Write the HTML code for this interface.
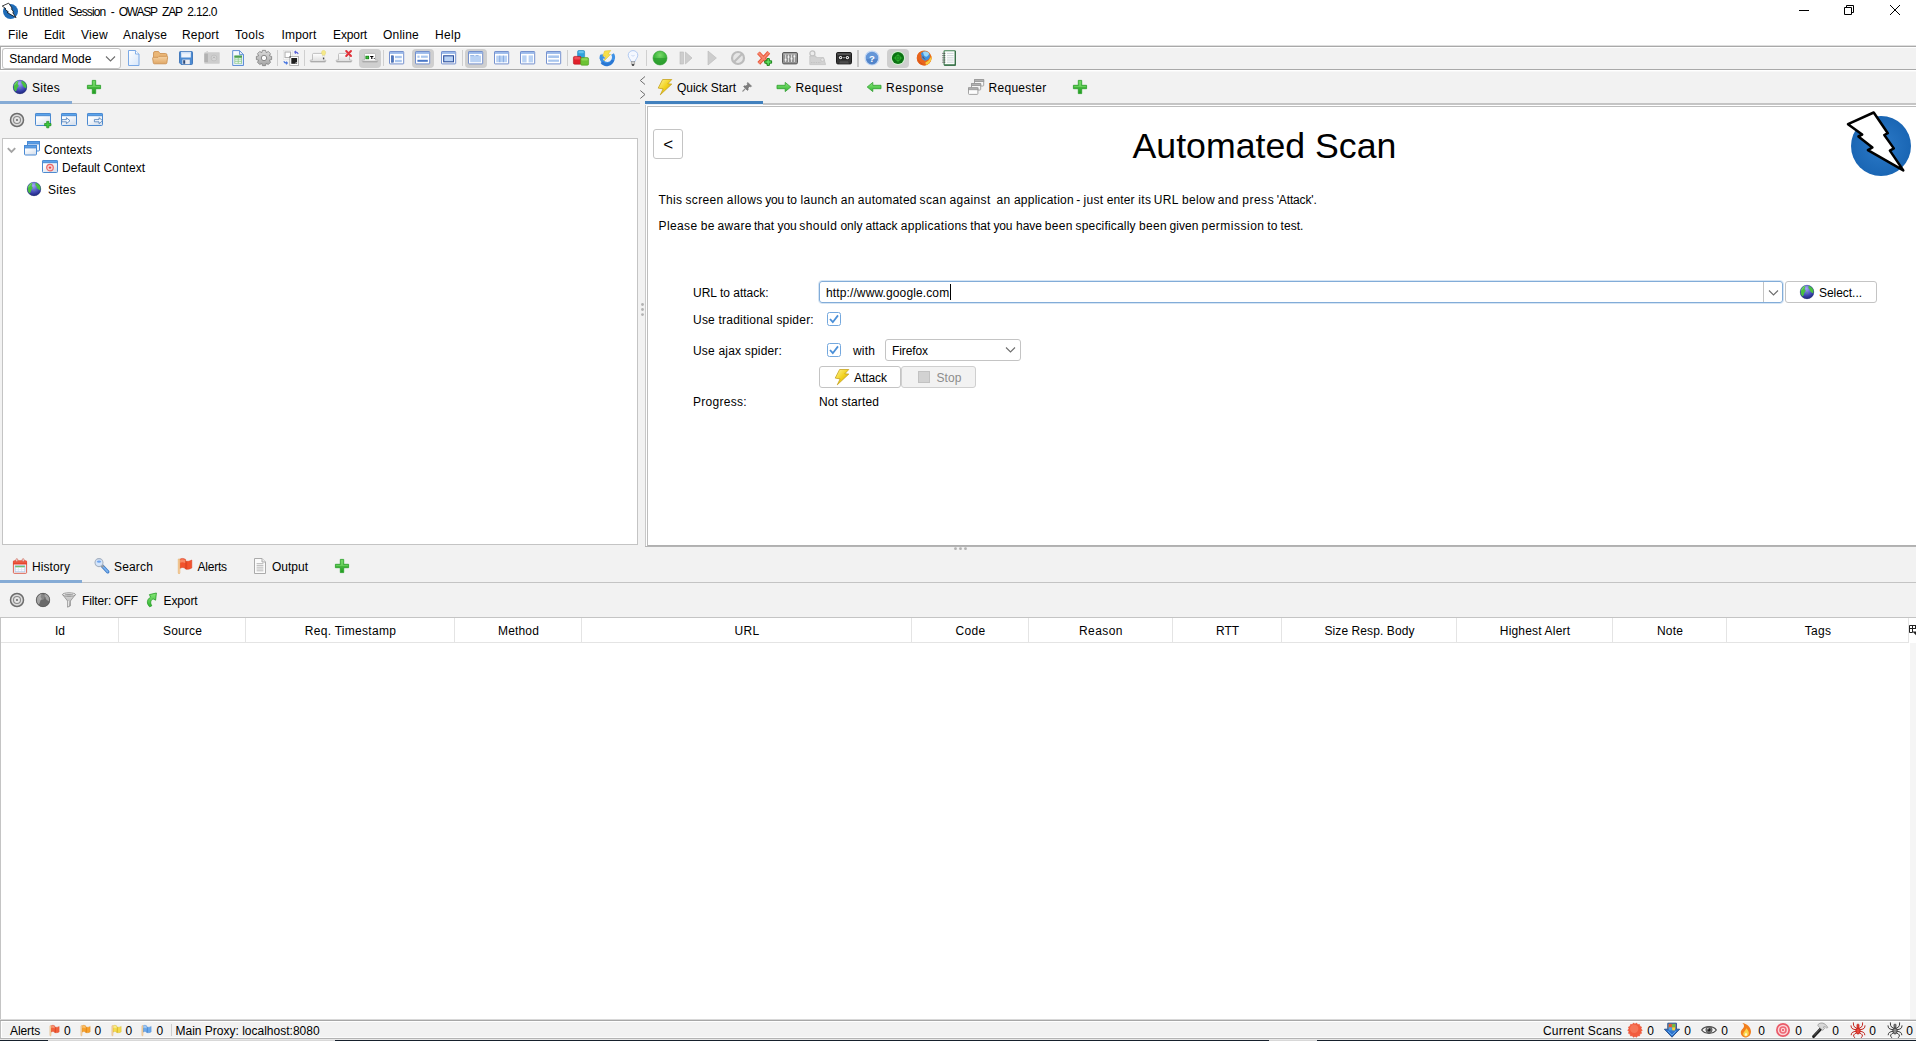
<!DOCTYPE html>
<html><head><meta charset="utf-8"><title>Untitled Session - OWASP ZAP 2.12.0</title>
<style>
html,body{margin:0;padding:0;}
body{width:1916px;height:1041px;overflow:hidden;background:#f2f2f2;position:relative;font-family:"Liberation Sans",sans-serif;font-size:12px;color:#000;}
.a{position:absolute;box-sizing:border-box;}
.t{position:absolute;white-space:nowrap;line-height:14px;font-size:12px;}
svg{position:absolute;overflow:visible;}
.tb{position:absolute;box-sizing:border-box;background:#cfcfcf;border-radius:4px;}
.btn{position:absolute;box-sizing:border-box;background:#fff;border:1px solid #c4c4c4;border-radius:3px;}
</style></head><body>


<svg width="0" height="0" style="left:0;top:0"><defs>
<linearGradient id="gBlueV" x1="0" y1="0" x2="0" y2="1"><stop offset="0" stop-color="#7fb4ea"/><stop offset="1" stop-color="#3f7fc8"/></linearGradient>
<linearGradient id="gDoc" x1="0" y1="0" x2="1" y2="1"><stop offset="0" stop-color="#ffffff"/><stop offset="1" stop-color="#d6e6fa"/></linearGradient>
<linearGradient id="gFolder" x1="0" y1="0" x2="0" y2="1"><stop offset="0" stop-color="#f6d3a4"/><stop offset="1" stop-color="#e0a766"/></linearGradient>
<linearGradient id="gGreen" x1="0" y1="0" x2="0" y2="1"><stop offset="0" stop-color="#6fd45f"/><stop offset="1" stop-color="#1f9a1f"/></linearGradient>
<linearGradient id="gGreenL" x1="0" y1="0" x2="0" y2="1"><stop offset="0" stop-color="#86e878"/><stop offset="1" stop-color="#32b432"/></linearGradient>
<linearGradient id="gWin" x1="0" y1="0" x2="0.6" y2="1"><stop offset="0" stop-color="#ffffff"/><stop offset="0.4" stop-color="#fbfcfe"/><stop offset="1" stop-color="#d9e2ee"/></linearGradient>
<radialGradient id="gGlobe" cx="0.45" cy="0.25" r="0.75"><stop offset="0" stop-color="#a8a8f6"/><stop offset="0.45" stop-color="#5c62d0"/><stop offset="0.8" stop-color="#2f389c"/><stop offset="1" stop-color="#1f2778"/></radialGradient>
<radialGradient id="gGreenBall" cx="0.5" cy="0.3" r="0.8"><stop offset="0" stop-color="#7ad86a"/><stop offset="0.55" stop-color="#39b53a"/><stop offset="1" stop-color="#1f8f24"/></radialGradient>
<radialGradient id="gZap" cx="0.5" cy="0.5" r="0.5"><stop offset="0" stop-color="#2c7ac8"/><stop offset="1" stop-color="#1a66b4"/></radialGradient>
<linearGradient id="gBolt" x1="0" y1="0" x2="1" y2="1"><stop offset="0" stop-color="#fdf59a"/><stop offset="0.5" stop-color="#f2d21e"/><stop offset="1" stop-color="#c49a0c"/></linearGradient>
<linearGradient id="gGrey" x1="0" y1="0" x2="0" y2="1"><stop offset="0" stop-color="#dcdcdc"/><stop offset="1" stop-color="#a4a4a4"/></linearGradient>
<linearGradient id="gTab" x1="0" y1="0" x2="0" y2="1"><stop offset="0" stop-color="#ffffff"/><stop offset="1" stop-color="#dddddd"/></linearGradient>
</defs></svg>

<div class="a" style="left:0px;top:0px;width:1916px;height:46px;background:#fff;"></div>
<svg style="left:1px;top:1.8px" width="17" height="17" viewBox="1843 108 68 68"><circle cx="1881" cy="146" r="30" fill="#1f6cb8"/><path d="M1873.7 112.5 L1848 124.2 L1862.2 134.6 L1858.4 136.4 L1872.4 147.5 L1867.9 150.1 L1903.3 170.4 L1889.9 150.6 L1893.8 148.4 L1884.3 135 L1887.8 133.2 Z" fill="#fff" stroke="#000" stroke-width="3" stroke-linejoin="round"/></svg>
<div class="t" style="left:23.6px;top:5px;letter-spacing:-0.10px;">Untitled</div>
<div class="t" style="left:68.7px;top:5px;letter-spacing:-0.87px;">Session</div>
<div class="t" style="left:110.7px;top:5px;">-</div>
<div class="t" style="left:118.8px;top:5px;letter-spacing:-1.28px;">OWASP</div>
<div class="t" style="left:162.0px;top:5px;letter-spacing:-1.17px;">ZAP</div>
<div class="t" style="left:187.3px;top:5px;letter-spacing:-0.67px;">2.12.0</div>
<svg style="left:1790px;top:0" width="126" height="24" viewBox="1790 0 126 24"><path d="M1799 10.5 h10" stroke="#000" stroke-width="1"/><path d="M1844.5 7.5 h7 v7 h-7z M1846.5 7.5 v-2 h7 v7 h-2" fill="none" stroke="#000" stroke-width="1"/><path d="M1890 5 l10 10 M1900 5 l-10 10" stroke="#000" stroke-width="1"/></svg>
<div class="t" style="left:8px;top:28px;letter-spacing:0.17px;">File</div>
<div class="t" style="left:44px;top:28px;letter-spacing:0.08px;">Edit</div>
<div class="t" style="left:81px;top:28px;letter-spacing:0.25px;">View</div>
<div class="t" style="left:123px;top:28px;letter-spacing:0.19px;">Analyse</div>
<div class="t" style="left:182px;top:28px;letter-spacing:0.16px;">Report</div>
<div class="t" style="left:235px;top:28px;letter-spacing:0.33px;">Tools</div>
<div class="t" style="left:281.5px;top:28px;letter-spacing:0.17px;">Import</div>
<div class="t" style="left:333px;top:28px;letter-spacing:-0.11px;">Export</div>
<div class="t" style="left:383px;top:28px;letter-spacing:0.22px;">Online</div>
<div class="t" style="left:435px;top:28px;letter-spacing:0.33px;">Help</div>
<div class="a" style="left:0px;top:45px;width:1916px;height:1px;background:#dedede;"></div>
<div class="a" style="left:0px;top:46px;width:1916px;height:1px;background:#a9a9a9;"></div>
<div class="a" style="left:0px;top:47px;width:1916px;height:1px;background:#fff;"></div>
<div class="a" style="left:0px;top:69px;width:1916px;height:1px;background:#a9a9a9;"></div>
<div class="a" style="left:0px;top:70px;width:1916px;height:1px;background:#fff;"></div>
<div class="a" style="left:0px;top:71px;width:1916px;height:1px;background:#f8f8f8;"></div>
<div class="a" style="left:0px;top:47px;width:1px;height:22px;background:#a9a9a9;"></div>
<div class="a" style="left:1px;top:47px;width:1px;height:22px;background:#fff;"></div>
<div class="a" style="left:2px;top:48px;width:119px;height:21px;background:#fff;border:1px solid #c4c4c4;border-radius:3px"></div>
<div class="t" style="left:9.2px;top:52px;letter-spacing:0.02px;">Standard Mode</div>
<svg style="left:105px;top:54.5px" width="11" height="8" viewBox="0 0 11 8"><path d="M1 1.5 L5.5 6 L10 1.5" fill="none" stroke="#6e6e6e" stroke-width="1.1"/></svg>
<div class="tb" style="left:359px;top:49px;width:22px;height:19px"></div>
<div class="tb" style="left:412px;top:49px;width:22px;height:19px"></div>
<div class="tb" style="left:465px;top:49px;width:22px;height:19px"></div>
<div class="tb" style="left:887px;top:49px;width:22px;height:19px"></div>
<div class="a" style="left:277px;top:50px;width:1px;height:16px;background:#cfcfcf;"></div>
<div class="a" style="left:304px;top:50px;width:1px;height:16px;background:#cfcfcf;"></div>
<div class="a" style="left:383px;top:50px;width:1px;height:16px;background:#cfcfcf;"></div>
<div class="a" style="left:462px;top:50px;width:1px;height:16px;background:#cfcfcf;"></div>
<div class="a" style="left:567px;top:50px;width:1px;height:16px;background:#cfcfcf;"></div>
<div class="a" style="left:646px;top:50px;width:1px;height:16px;background:#cfcfcf;"></div>
<div class="a" style="left:857px;top:50px;width:2px;height:17px;background:#c8c8c8;"></div>
<svg style="left:126px;top:50px" width="16" height="16" viewBox="0 0 16 16"><path d="M2.5 0.5 h7 l3.5 3.5 v11.5 h-10.5z" fill="url(#gDoc)" stroke="#7aa9e6" stroke-width="1"/><path d="M9.5 0.5 v3.5 h3.5" fill="#fff" stroke="#7aa9e6" stroke-width="0.9"/></svg>
<svg style="left:152px;top:49.5px" width="16" height="16" viewBox="0 0 16 16"><path d="M1.5 3 q0-1.5 1.5-1.5 h3.5 l1.5 2 h5.5 q1.5 0 1.5 1.5 v4 h-13.5z" fill="#eab676" stroke="#c98d4c" stroke-width="0.8"/><path d="M0.6 8.2 q0-0.9 1-0.9 h4.5 l1-1 h7.6 q1 0 0.9 0.9 l-0.7 5.6 q-0.1 1-1.1 1 h-11.4 q-1 0-1.1-1z" fill="url(#gFolder)" stroke="#c98d4c" stroke-width="0.8"/></svg>
<svg style="left:178px;top:50px" width="16" height="16" viewBox="0 0 16 16"><path d="M1.5 2.4 q0-0.9 0.9-0.9 h11.2 q0.9 0 0.9 0.9 v11.2 q0 0.9-0.9 0.9 h-10.4 l-1.7-1.7z" fill="#4d8bd2" stroke="#3a72b8" stroke-width="0.9"/><rect x="3.2" y="1.9" width="9.6" height="5.6" fill="#eef4fc"/><rect x="3.2" y="1.9" width="9.6" height="1.6" fill="#cfe0f6"/><rect x="4.4" y="9.6" width="7.4" height="4.6" fill="#ececf0"/><rect x="5.2" y="10.2" width="2" height="3.6" fill="#2c4a7c"/></svg>
<svg style="left:204px;top:50px" width="16" height="16" viewBox="0 0 16 16"><rect x="0.3" y="2.3" width="15.4" height="11.4" rx="0.6" fill="#cdcdcd"/><rect x="0.3" y="3.6" width="3.6" height="8.6" fill="#b2b2b2"/><rect x="2.4" y="1" width="1.6" height="1.6" fill="#d4d4d4"/><circle cx="10" cy="8" r="2.9" fill="#d6d6d6" stroke="#bcbcbc" stroke-width="0.8"/><path d="M8.8 8.4 l1.2 -1.6 l1.2 1.6" fill="none" stroke="#b0b0b0" stroke-width="0.8"/></svg>
<svg style="left:230px;top:50px" width="16" height="16" viewBox="0 0 16 16"><path d="M2.7 0.6 h6.8 l4 4 v10.9 h-10.8z" fill="url(#gDoc)" stroke="#5f8fd6" stroke-width="1"/><path d="M9.5 0.6 v4 h4z" fill="#e8effa" stroke="#5f8fd6" stroke-width="0.9"/><rect x="4.4" y="5.6" width="7.6" height="8.2" fill="#8fca8f"/><rect x="4.4" y="5.6" width="7.6" height="1.9" fill="#4f9f4f"/><path d="M5.2 8.9 h2.6 M8.6 8.9 h2.6 M5.2 10.8 h2.6 M8.6 10.8 h2.6 M5.2 12.7 h2.6 M8.6 12.7 h2.6" stroke="#fff" stroke-width="1"/></svg>
<svg style="left:256px;top:50px" width="16" height="16" viewBox="0 0 16 16"><path d="M5.79 2.64 L6.45 0.36 L9.55 0.36 L10.21 2.64 L10.23 2.65 L12.31 1.50 L14.50 3.69 L13.35 5.77 L13.36 5.79 L15.64 6.45 L15.64 9.55 L13.36 10.21 L13.35 10.23 L14.50 12.31 L12.31 14.50 L10.23 13.35 L10.21 13.36 L9.55 15.64 L6.45 15.64 L5.79 13.36 L5.77 13.35 L3.69 14.50 L1.50 12.31 L2.65 10.23 L2.64 10.21 L0.36 9.55 L0.36 6.45 L2.64 5.79 L2.65 5.77 L1.50 3.69 L3.69 1.50 L5.77 2.65 Z" fill="url(#gGrey)" stroke="#7d7d7d" stroke-width="0.8" stroke-linejoin="round"/><circle cx="8" cy="8" r="2.7" fill="#fbfbfb" stroke="#7d7d7d" stroke-width="0.9"/></svg>
<svg style="left:283px;top:50px" width="16" height="16" viewBox="0 0 16 16"><rect x="0.4" y="0.4" width="9" height="9" fill="#fff" stroke="#dcdcdc" stroke-width="0.6"/><rect x="2" y="2" width="5.6" height="5.6" fill="#fff" stroke="#b0b0b0" stroke-width="1.1"/><rect x="6.8" y="6.6" width="8.8" height="8.8" fill="#fff" stroke="#a4a4a4" stroke-width="0.8"/><rect x="8.3" y="8" width="5.8" height="5.8" fill="#1e1e1e"/><rect x="12.6" y="12.4" width="1.5" height="1.4" fill="#fff"/><rect x="13.1" y="12.9" width="0.8" height="0.8" fill="#222"/><rect x="6.6" y="6.4" width="1.2" height="1.2" fill="#333"/><path d="M15.2 4 q-0.8-2.2-3.4-1.8 M11.4 2.2 l1.7-1.3 M11.4 2.2 l1.7 1.3" stroke="#5a62d8" stroke-width="1.1" fill="none"/><path d="M0.8 11.2 q0.8 2.2 3.4 1.8 M4.6 13 l-1.7 1.3 M4.6 13 l-1.7-1.3" stroke="#4a78e0" stroke-width="1.1" fill="none"/></svg>
<svg style="left:310px;top:50px" width="16" height="16" viewBox="0 0 16 16"><path d="M2.5 10 V4.6 q0-1.2 1.2-1.2 h8.6 q1.2 0 1.2 1.2 V10 h1.6 q0.8 0 0.8 0.8 q0 0.8-0.8 0.8 h-14.2 q-0.8 0-0.8-0.8 q0-0.8 0.8-0.8z" fill="url(#gTab)" stroke="#b4b4b4" stroke-width="0.8"/><path d="M0.6 11.8 h14.8" stroke="#9a9a9a" stroke-width="0.8"/><path d="M13.6 0.4 c1.6 0 2.2 1.4 2 2.6 c-0.2 1-0.8 1.6-0.9 2.6 h-2.2 c-0.1-1-0.7-1.6-0.9-2.6 c-0.2-1.2 0.4-2.6 2-2.6z" fill="#f5e98a" stroke="#e3d46a" stroke-width="0.5"/><rect x="12.7" y="5.6" width="1.8" height="2" fill="#f4f4f4" stroke="#cfcfcf" stroke-width="0.3"/><rect x="12.9" y="7.6" width="1.4" height="1.5" fill="#4a4a4a"/></svg>
<svg style="left:336px;top:50px" width="16" height="16" viewBox="0 0 16 16"><path d="M2.5 10 V4.6 q0-1.2 1.2-1.2 h8.6 q1.2 0 1.2 1.2 V10 h1.6 q0.8 0 0.8 0.8 q0 0.8-0.8 0.8 h-14.2 q-0.8 0-0.8-0.8 q0-0.8 0.8-0.8z" fill="url(#gTab)" stroke="#b4b4b4" stroke-width="0.8"/><path d="M0.6 11.8 h14.8" stroke="#9a9a9a" stroke-width="0.8"/><path d="M10.2 1 L15 6 M15 1 L10.2 6" stroke="#e0323a" stroke-width="2" stroke-linecap="round"/></svg>
<svg style="left:362px;top:50px" width="16" height="16" viewBox="0 0 16 16"><path d="M2.5 10 V4.6 q0-1.2 1.2-1.2 h8.6 q1.2 0 1.2 1.2 V10 h1.6 q0.8 0 0.8 0.8 q0 0.8-0.8 0.8 h-14.2 q-0.8 0-0.8-0.8 q0-0.8 0.8-0.8z" fill="url(#gTab)" stroke="#b4b4b4" stroke-width="0.8"/><path d="M0.6 11.8 h14.8" stroke="#9a9a9a" stroke-width="0.8"/><rect x="3.2" y="4" width="9.6" height="6" fill="#fff"/><rect x="3.9" y="6.2" width="2.8" height="2.6" fill="#3cc43c" stroke="#0a7a0a" stroke-width="0.8"/><path d="M8.2 6.5 h3.2 M9.8 6.5 v2.5" stroke="#000" stroke-width="1.2"/><rect x="11.8" y="8" width="0.9" height="0.9" fill="#000"/></svg>
<svg style="left:388.5px;top:51px" width="16" height="16" viewBox="0 0 16 16"><rect x="0.5" y="0.5" width="14.2" height="12.4" rx="0.6" fill="#fff" stroke="#6585c8" stroke-width="0.9"/><rect x="1" y="1" width="13.2" height="1.9" fill="#9bbaea"/><rect x="2.4" y="4.8" width="2" height="6.4" fill="#4a78c8" stroke="#35589c" stroke-width="0.6"/><rect x="6" y="4.8" width="6.8" height="2.4" fill="#a9c6ee"/><rect x="6" y="8.8" width="6.8" height="2.4" fill="#a9c6ee"/></svg>
<svg style="left:415px;top:51px" width="16" height="16" viewBox="0 0 16 16"><rect x="0.5" y="0.5" width="14.2" height="12.4" rx="0.6" fill="#fff" stroke="#6585c8" stroke-width="0.9"/><rect x="1" y="1" width="13.2" height="1.9" fill="#9bbaea"/><rect x="2.4" y="4.6" width="2.2" height="2.2" fill="#a9c6ee"/><rect x="6" y="4.6" width="6.8" height="2.2" fill="#a9c6ee"/><rect x="2.4" y="8.8" width="10.4" height="2" fill="#4a78c8"/></svg>
<svg style="left:441px;top:51px" width="16" height="16" viewBox="0 0 16 16"><rect x="0.5" y="0.5" width="14.2" height="12.4" rx="0.6" fill="#fff" stroke="#6585c8" stroke-width="0.9"/><rect x="1" y="1" width="13.2" height="1.9" fill="#9bbaea"/><rect x="2.7" y="4.8" width="9.8" height="6" fill="#b9d2f4" stroke="#2c4f9c" stroke-width="1.1"/></svg>
<svg style="left:468px;top:51px" width="16" height="16" viewBox="0 0 16 16"><rect x="0.5" y="0.5" width="14.2" height="12.4" rx="0.6" fill="#fff" stroke="#6585c8" stroke-width="0.9"/><rect x="1" y="1" width="13.2" height="1.9" fill="#9bbaea"/><rect x="2.2" y="4.6" width="10.8" height="6.6" fill="#b9d2f4"/><path d="M2.2 4.6 h4 M7.6 4.6 h3" stroke="#7fa4dc" stroke-width="0.8"/></svg>
<svg style="left:494px;top:51px" width="16" height="16" viewBox="0 0 16 16"><rect x="0.5" y="0.5" width="14.2" height="12.4" rx="0.6" fill="#fff" stroke="#6585c8" stroke-width="0.9"/><rect x="1" y="1" width="13.2" height="1.9" fill="#9bbaea"/><rect x="2.2" y="4.6" width="10.8" height="6.6" fill="#b9d2f4"/><path d="M5.8 4.6 v6.6 M9.4 4.6 v6.6" stroke="#7fa4dc" stroke-width="0.9"/></svg>
<svg style="left:520px;top:51px" width="16" height="16" viewBox="0 0 16 16"><rect x="0.5" y="0.5" width="14.2" height="12.4" rx="0.6" fill="#fff" stroke="#6585c8" stroke-width="0.9"/><rect x="1" y="1" width="13.2" height="1.9" fill="#9bbaea"/><rect x="2.2" y="4.4" width="4.4" height="7" fill="#b9d2f4"/><rect x="8.6" y="4.4" width="4.4" height="7" fill="#b9d2f4"/></svg>
<svg style="left:546px;top:51px" width="16" height="16" viewBox="0 0 16 16"><rect x="0.5" y="0.5" width="14.2" height="12.4" rx="0.6" fill="#fff" stroke="#6585c8" stroke-width="0.9"/><rect x="1" y="1" width="13.2" height="1.9" fill="#9bbaea"/><rect x="2.2" y="4.4" width="10.8" height="2.6" fill="#a9c6ee"/><rect x="2.2" y="8.6" width="10.8" height="2.2" fill="#a9c6ee"/></svg>
<svg style="left:572.5px;top:49.5px" width="16" height="16" viewBox="0 0 16 16"><rect x="4.6" y="0.5" width="7" height="7.4" rx="1.3" fill="#2ea2dc" stroke="#1c86bc" stroke-width="0.6"/><rect x="0.4" y="6.4" width="7.8" height="7.8" rx="1.3" fill="#e0202a" stroke="#b8141c" stroke-width="0.6"/><rect x="7.6" y="7.6" width="8" height="7.6" rx="1.3" fill="#6cc234" stroke="#4a9a1c" stroke-width="0.6"/><rect x="8.4" y="8.2" width="6.4" height="2.4" rx="1" fill="#9be060" opacity="0.7"/><rect x="1.2" y="7" width="6.2" height="2.4" rx="1" fill="#f4606a" opacity="0.7"/><rect x="5.4" y="1.1" width="5.4" height="2.2" rx="1" fill="#7cd0f4" opacity="0.7"/></svg>
<svg style="left:599px;top:50px" width="16" height="16" viewBox="0 0 16 16"><path d="M13.6 4 A6.2 6.2 0 1 1 2.6 5" fill="none" stroke="#3f92e6" stroke-width="3"/><path d="M0.4 8.6 L6.6 8.8 L3 3.4Z" fill="#3f92e6"/><path d="M2.8 12.2 A6.2 6.2 0 0 0 13.8 10" fill="none" stroke="#2a78d4" stroke-width="3"/><path d="M5.6 1 L11.8 0.4 L9 4.2 L11.6 4.4 L5.2 10.8 L6.8 6.2 L3.8 6.2Z" fill="#f7e04a" stroke="#dcbc24" stroke-width="0.5"/></svg>
<svg style="left:625px;top:50px" width="16" height="16" viewBox="0 0 16 16"><path d="M8 0.6 C5 0.6 3.2 2.8 3.2 5.2 C3.2 7.8 5.6 9.2 6 11.6 h4 C10.4 9.2 12.8 7.8 12.8 5.2 C12.8 2.8 11 0.6 8 0.6Z" fill="#f4f8ff" stroke="#a9c4ee" stroke-width="0.9"/><path d="M6.4 5.4 q1.6 1.4 3.2 0" fill="none" stroke="#b9cdee" stroke-width="0.7"/><rect x="6.2" y="11.6" width="3.6" height="2.6" fill="#cfcfcf" stroke="#8a8a8a" stroke-width="0.5"/><rect x="6.8" y="14.2" width="2.4" height="1.5" rx="0.6" fill="#222"/></svg>
<svg style="left:652px;top:50px" width="16" height="16" viewBox="0 0 16 16"><circle cx="8" cy="8" r="7" fill="url(#gGreenBall)" stroke="#2a9a2c" stroke-width="0.6"/><path d="M1.6 8 h12.8 a6.4 6.4 0 0 1 -12.8 0z" fill="#2e9e30" opacity="0.75"/></svg>
<svg style="left:678px;top:50px" width="16" height="16" viewBox="0 0 16 16"><rect x="2" y="2" width="3.4" height="12" fill="#cdcdcd" stroke="#b8b8b8" stroke-width="0.6"/><path d="M7.4 2 L14 8 L7.4 14Z" fill="#cdcdcd" stroke="#b8b8b8" stroke-width="0.6"/></svg>
<svg style="left:704px;top:50px" width="16" height="16" viewBox="0 0 16 16"><path d="M4 1 L12.4 8 L4 15Z" fill="#cdcdcd" stroke="#b8b8b8" stroke-width="0.6"/></svg>
<svg style="left:730px;top:50px" width="16" height="16" viewBox="0 0 16 16"><circle cx="8" cy="8" r="6" fill="#e6e6e6" stroke="#bcbcbc" stroke-width="2.2"/><path d="M4 12 L12 4" stroke="#bcbcbc" stroke-width="2.2"/></svg>
<svg style="left:756px;top:50px" width="16" height="16" viewBox="0 0 16 16"><path d="M2.4 2.8 L12 13 M12.8 2.4 L2.8 13.4" stroke="#e8553a" stroke-width="3.8" stroke-linecap="butt"/><path d="M2.4 2.8 L12 13 M12.8 2.4 L2.8 13.4" stroke="#f6866c" stroke-width="2" stroke-linecap="butt"/><path d="M11 8.6 h2.4 v2.2 h2.2 v2.4 h-2.2 v2.2 h-2.4 v-2.2 h-2.2 v-2.4 h2.2z" fill="#5fdc5f" stroke="#0f7a0f" stroke-width="0.9"/></svg>
<svg style="left:782px;top:50px" width="16" height="16" viewBox="0 0 16 16"><rect x="0.5" y="2.5" width="15" height="11.4" rx="1.4" fill="#929292" stroke="#5a5a5a"/><rect x="1.4" y="3.4" width="13.2" height="1.6" rx="0.8" fill="#a8a8a8"/><path d="M3.6 4.6 v7.4 M6.5 4.6 v7.4 M9.5 4.6 v7.4 M12.4 4.6 v7.4" stroke="#e4e4e4" stroke-width="0.9"/><path d="M2.7 9.6 h1.8 M5.6 7 h1.8 M8.6 8.6 h1.8 M11.5 6.4 h1.8" stroke="#f6f6f6" stroke-width="1.7"/></svg>
<svg style="left:809px;top:50px" width="16" height="16" viewBox="0 0 16 16"><circle cx="3.4" cy="3.4" r="2.5" fill="#ececec" stroke="#c2c2c2" stroke-width="1.3"/><path d="M0.8 6 h6.2 v1.6 h7.6 l2 7 h-15.8z" fill="#d2d2d2" stroke="#c0c0c0" stroke-width="0.7"/><circle cx="13.4" cy="9.8" r="1.7" fill="#e4e4e4" stroke="#bcbcbc" stroke-width="0.6"/><path d="M2 12.6 h10" stroke="#bdbdbd" stroke-width="0.8" stroke-dasharray="1.4 1"/></svg>
<svg style="left:836px;top:50px" width="16" height="16" viewBox="0 0 16 16"><rect x="0.5" y="2.5" width="15" height="11.4" rx="1.3" fill="#363636" stroke="#1c1c1c"/><rect x="1.4" y="3.3" width="13.2" height="1.6" fill="#585858"/><rect x="2.4" y="5.6" width="11.2" height="4" rx="1" fill="#1a1a1a"/><circle cx="4.6" cy="7.6" r="1.7" fill="#f2f2f2"/><circle cx="4.6" cy="7.6" r="0.7" fill="#222"/><circle cx="11.4" cy="7.6" r="1.7" fill="#f2f2f2"/><circle cx="11.4" cy="7.6" r="0.7" fill="#222"/><rect x="6.8" y="6.9" width="2.4" height="1.4" fill="#8a8a8a"/><path d="M3 13.4 l1-2.2 h8 l1 2.2" fill="#4e4e4e"/></svg>
<svg style="left:864px;top:50px" width="16" height="16" viewBox="0 0 16 16"><circle cx="8" cy="8" r="6.9" fill="#6496d8" stroke="#c4d8f4" stroke-width="1.3"/><path d="M2.4 9 a5.6 5.6 0 0 0 11.2 0z" fill="#4a7ec4" opacity="0.7"/><text x="8" y="11.6" font-family="Liberation Sans, sans-serif" font-weight="bold" font-size="9.5" fill="#fff" text-anchor="middle">?</text></svg>
<svg style="left:890px;top:49.5px" width="16" height="16" viewBox="0 0 16 16"><circle cx="8" cy="8" r="7" fill="#d2f4d2"/><circle cx="8" cy="8" r="6.1" fill="#0b7213"/><circle cx="8" cy="8" r="2.6" fill="none" stroke="#30b830" stroke-width="0.8"/><path d="M8 3.6 v8.8 M3.6 8 h8.8" stroke="#30b830" stroke-width="0.8"/></svg>
<svg style="left:916px;top:50px" width="16" height="16" viewBox="0 0 16 16"><circle cx="8.2" cy="8" r="7.4" fill="#e8701e"/><circle cx="9" cy="6.2" r="4.8" fill="#3f92e0"/><path d="M7 2 C9 0.8 12 1.4 13.2 3.6 C12.6 6 10.8 7 9.4 6.6 C8 6 7.6 4.6 7 2Z" fill="#9ad8f8"/><path d="M0.8 8 C0.8 5 2.4 2.6 4.8 1.6 C4.2 3.4 4.6 4.6 5.8 5.2 C5 6.6 5.4 8.6 7 9.8 C8.6 11 10.6 10.8 12 9.8 C13.4 9 14.4 7.6 15.4 6 C16 10.2 13.4 14.8 9 15.4 C4.4 15.8 0.8 12.4 0.8 8Z" fill="#e8641c"/><path d="M2 9 C2.4 12 5 14.6 8.4 14.8 C5.6 13.8 3.4 11.8 2 9Z" fill="#c8401c" opacity="0.7"/><path d="M15.4 6 C16 9.6 14.2 13.4 10.8 14.8 C9.6 14.4 9.2 13.4 9.6 12.2 C11.2 11.8 13 10.4 13.6 8.8 C14.4 8 15 7 15.4 6Z" fill="#f8cc3c"/><path d="M6 6.6 C6.6 8.2 8 9.6 9.8 9.6 L8.4 8.2 L7.6 6.4Z" fill="#7c2c10" opacity="0.6"/></svg>
<svg style="left:941px;top:50px" width="16" height="16" viewBox="0 0 16 16"><rect x="3.1" y="0.7" width="11.2" height="14.4" rx="0.6" fill="#fbfdfb" stroke="#3f8050" stroke-width="1.1"/><path d="M14.3 1 v14.1 h-11" fill="none" stroke="#356c44" stroke-width="1.1"/><path d="M6 3.4 h6.6 M6 5.6 h6.6 M6 7.8 h6.6 M6 10 h6.6 M6 12.2 h6.6" stroke="#c4ccd0" stroke-width="0.8"/><path d="M1.4 3.4 h3.4 M1.4 5.6 h3.4 M1.4 7.8 h3.4 M1.4 10 h3.4 M1.4 12.2 h3.4" stroke="#4a4a4a" stroke-width="1" stroke-dasharray="1.2 0.5"/></svg>
<div class="a" style="left:0px;top:103px;width:640px;height:1px;background:#c4c4c4;"></div>
<div class="a" style="left:0px;top:101px;width:72px;height:3px;background:#85abd5;"></div>
<svg style="left:12px;top:79px" width="16" height="16" viewBox="0 0 16 16"><circle cx="8" cy="8" r="7" fill="url(#gGlobe)"/><path d="M3.4 3.4 C4.4 2.2 5.6 1.8 6.4 2.2 C6.4 3.4 5.4 4 5.6 5.2 C6.4 5.8 7 6.6 6.4 7.6 C5.6 8 5.4 9 5 10 C4.6 11 4.4 12 3.6 12.6 C1.4 10.4 1 6.2 3.4 3.4Z" fill="#48c040"/><path d="M9.6 1.8 C11.2 2 12.8 3 13.8 4.6 C14.6 6 14.8 7.6 14.4 9 C13.6 9.4 12.8 8.8 12 8 C11 7.6 10.4 6.8 10.8 5.8 C10.2 5 9.2 4.4 9.4 3.2Z" fill="#48c040"/><path d="M7.4 8.6 C8.2 8.2 8.8 8.8 8.6 9.6 C8.2 10 7.6 9.6 7.4 8.6Z" fill="#48c040"/><path d="M3.4 3.4 C4.4 2.2 5.6 1.8 6.4 2.2 C6 3 5 3.4 4.6 4.4 C4 5.4 3 6.2 2 6.4 C2.2 5.2 2.6 4.2 3.4 3.4Z" fill="#7ee070" opacity="0.7"/><circle cx="8" cy="8" r="6.8" fill="none" stroke="#27357a" stroke-width="0.6" opacity="0.55"/></svg>
<div class="t" style="left:32px;top:81px;letter-spacing:0.26px;">Sites</div>
<svg style="left:86px;top:79px" width="16" height="16" viewBox="0 0 16 16"><path d="M6.3 1.4 h3.4 v4.9 h4.9 v3.4 h-4.9 v4.9 h-3.4 v-4.9 h-4.9 v-3.4 h4.9z" fill="url(#gGreen)" stroke="#27a027" stroke-width="0.8" stroke-linejoin="round"/><path d="M6.9 2.2 h2.2 v4.7 h4.7 v1 h-11.6 v-1 h4.7z" fill="#7be070" opacity="0.55"/></svg>
<svg style="left:9px;top:112px" width="16" height="16" viewBox="0 0 16 16"><circle cx="8" cy="8" r="6.5" fill="#dcdcdc" stroke="#6c6c6c" stroke-width="1.5"/><circle cx="8" cy="8" r="3.5" fill="#e6e6e6" stroke="#8a8a8a" stroke-width="1.1"/><circle cx="8" cy="8" r="1.1" fill="#707070"/></svg>
<svg style="left:35px;top:112px" width="16" height="16" viewBox="0 0 16 16"><rect x="0.5" y="1.5" width="15" height="12" rx="0.9" fill="url(#gWin)" stroke="#4c8ad0" stroke-width="1"/><path d="M0.5 3.7 v-1.3 q0-0.9 0.9-0.9 h13.2 q0.9 0 0.9 0.9 v1.3z" fill="#5aa4ec" stroke="#4c8ad0" stroke-width="1"/><path d="M11.7 9.4 h2.2 v2.1 h2.1 v2.2 h-2.1 v2.1 h-2.2 v-2.1 h-2.1 v-2.2 h2.1z" fill="#3cc83c" stroke="#1d8a1d" stroke-width="0.7"/></svg>
<svg style="left:61px;top:112px" width="16" height="16" viewBox="0 0 16 16"><rect x="0.5" y="1.5" width="15" height="12" rx="0.9" fill="url(#gWin)" stroke="#4c8ad0" stroke-width="1"/><path d="M0.5 3.7 v-1.3 q0-0.9 0.9-0.9 h13.2 q0.9 0 0.9 0.9 v1.3z" fill="#5aa4ec" stroke="#4c8ad0" stroke-width="1"/><path d="M0.8 7.6 h4.6 v-1.9 l3.6 3 l-3.6 3 v-1.9 h-4.6z" fill="#f4f8fd" stroke="#4a7cb8" stroke-width="0.8" stroke-linejoin="round"/></svg>
<svg style="left:87px;top:112px" width="16" height="16" viewBox="0 0 16 16"><rect x="0.5" y="1.5" width="15" height="12" rx="0.9" fill="url(#gWin)" stroke="#4c8ad0" stroke-width="1"/><path d="M0.5 3.7 v-1.3 q0-0.9 0.9-0.9 h13.2 q0.9 0 0.9 0.9 v1.3z" fill="#5aa4ec" stroke="#4c8ad0" stroke-width="1"/><path d="M7.4 7.6 h4.6 v-1.9 l3.6 3 l-3.6 3 v-1.9 h-4.6z" fill="#f4f8fd" stroke="#4a7cb8" stroke-width="0.8" stroke-linejoin="round"/></svg>
<div class="a" style="left:2px;top:138px;width:636px;height:407px;background:#fff;border:1px solid #c4c4c4"></div>
<svg style="left:6px;top:146px" width="11" height="8" viewBox="6 146 11 8"><path d="M7.8 148.2 L11.5 152 L15.2 148.2" fill="none" stroke="#a4a4a4" stroke-width="1.9"/></svg>
<svg style="left:24px;top:141px" width="16" height="16" viewBox="0 0 16 16"><rect x="3.5" y="0.5" width="12" height="9.5" rx="1" fill="#eef4fc" stroke="#4a8ad4"/><rect x="3.5" y="0.5" width="12" height="2.4" fill="#5a9ee6" stroke="#4a8ad4"/><rect x="0.5" y="4.5" width="12" height="9.5" rx="1" fill="url(#gWin)" stroke="#4a8ad4"/><rect x="0.5" y="4.5" width="12" height="2.4" fill="#5a9ee6" stroke="#4a8ad4"/></svg>
<div class="t" style="left:44px;top:143px;letter-spacing:0.08px;">Contexts</div>
<svg style="left:42px;top:159px" width="16" height="16" viewBox="0 0 16 16"><rect x="0.5" y="1.5" width="15" height="12" rx="0.9" fill="url(#gWin)" stroke="#4c8ad0" stroke-width="1"/><path d="M0.5 3.7 v-1.3 q0-0.9 0.9-0.9 h13.2 q0.9 0 0.9 0.9 v1.3z" fill="#5aa4ec" stroke="#4c8ad0" stroke-width="1"/><circle cx="8" cy="8.6" r="3.3" fill="#f9d4d4" stroke="#ea6a6a" stroke-width="1.2"/><circle cx="8" cy="8.6" r="1.2" fill="#e64a4a"/></svg>
<div class="t" style="left:62px;top:161px;letter-spacing:0.02px;">Default Context</div>
<svg style="left:26px;top:181px" width="16" height="16" viewBox="0 0 16 16"><circle cx="8" cy="8" r="7" fill="url(#gGlobe)"/><path d="M3.4 3.4 C4.4 2.2 5.6 1.8 6.4 2.2 C6.4 3.4 5.4 4 5.6 5.2 C6.4 5.8 7 6.6 6.4 7.6 C5.6 8 5.4 9 5 10 C4.6 11 4.4 12 3.6 12.6 C1.4 10.4 1 6.2 3.4 3.4Z" fill="#48c040"/><path d="M9.6 1.8 C11.2 2 12.8 3 13.8 4.6 C14.6 6 14.8 7.6 14.4 9 C13.6 9.4 12.8 8.8 12 8 C11 7.6 10.4 6.8 10.8 5.8 C10.2 5 9.2 4.4 9.4 3.2Z" fill="#48c040"/><path d="M7.4 8.6 C8.2 8.2 8.8 8.8 8.6 9.6 C8.2 10 7.6 9.6 7.4 8.6Z" fill="#48c040"/><path d="M3.4 3.4 C4.4 2.2 5.6 1.8 6.4 2.2 C6 3 5 3.4 4.6 4.4 C4 5.4 3 6.2 2 6.4 C2.2 5.2 2.6 4.2 3.4 3.4Z" fill="#7ee070" opacity="0.7"/><circle cx="8" cy="8" r="6.8" fill="none" stroke="#27357a" stroke-width="0.6" opacity="0.55"/></svg>
<div class="t" style="left:48px;top:183px;letter-spacing:0.26px;">Sites</div>
<svg style="left:638px;top:74px" width="10" height="28" viewBox="638 74 10 28"><path d="M645 76.5 L640.3 80.5 L645 84.5 M640.3 90.5 L645 94.5 L640.3 98.5" fill="none" stroke="#6e6e6e" stroke-width="1"/></svg>
<svg style="left:640px;top:300px" width="6" height="20" viewBox="640 300 6 20"><circle cx="642.5" cy="304.5" r="1.4" fill="#b2b2b2"/><circle cx="642.5" cy="309.5" r="1.4" fill="#b2b2b2"/><circle cx="642.5" cy="314.6" r="1.4" fill="#b2b2b2"/></svg>
<svg style="left:950px;top:546px" width="20" height="6" viewBox="950 546 20 6"><circle cx="955.5" cy="548.7" r="1.4" fill="#b2b2b2"/><circle cx="960.5" cy="548.7" r="1.4" fill="#b2b2b2"/><circle cx="965.5" cy="548.7" r="1.4" fill="#b2b2b2"/></svg>
<div class="a" style="left:763px;top:103px;width:1153px;height:1px;background:#c4c4c4;"></div>
<div class="a" style="left:645px;top:101px;width:118px;height:3px;background:#4281be;"></div>
<svg style="left:657px;top:79px" width="16" height="16" viewBox="0 0 16 16"><path d="M5.6 0.5 L14.8 0.5 L10.8 4.8 L14.8 5.1 L3.3 15.8 L6.1 9.9 L1.2 9.1 Z" fill="url(#gBolt)" stroke="#c09a10" stroke-width="0.7" stroke-linejoin="round"/></svg>
<div class="t" style="left:677px;top:81px;letter-spacing:-0.03px;">Quick Start</div>
<svg style="left:742px;top:82px" width="10" height="10" viewBox="0 0 10 10"><path d="M5.8 0.4 L9.6 4.2 L8.6 4.8 L7.6 4.4 L6 6 L6.2 7.8 L5.4 8.4 L1.6 4.6 L2.2 3.8 L4 4 L5.6 2.4 L5.2 1.4Z" fill="#7e7e7e" stroke="#5e5e5e" stroke-width="0.5"/><path d="M3.6 6.4 L0.5 9.5" stroke="#8a8a8a" stroke-width="1.1"/></svg>
<svg style="left:776px;top:79px" width="16" height="16" viewBox="0 0 16 16"><path d="M1 6.3 h8.2 v-2.9 l5.6 4.6 l-5.6 4.6 v-2.9 h-8.2z" fill="url(#gGreenL)" stroke="#2e9e2e" stroke-width="0.8" stroke-linejoin="round"/></svg>
<div class="t" style="left:795.5px;top:81px;letter-spacing:0.33px;">Request</div>
<svg style="left:866px;top:79px" width="16" height="16" viewBox="0 0 16 16"><path d="M15 6.3 h-8.2 v-2.9 l-5.6 4.6 l5.6 4.6 v-2.9 h8.2z" fill="url(#gGreenL)" stroke="#2e9e2e" stroke-width="0.8" stroke-linejoin="round"/></svg>
<div class="t" style="left:886px;top:81px;letter-spacing:0.50px;">Response</div>
<svg style="left:968px;top:79px" width="16" height="16" viewBox="0 0 16 16"><rect x="6.5" y="0.6" width="9.2" height="6.4" rx="0.8" fill="#f6f6f6" stroke="#9a9a9a" stroke-width="0.9"/><rect x="6.5" y="0.6" width="9.2" height="1.9" fill="#b4b4b4" stroke="#9a9a9a" stroke-width="0.9"/><rect x="3.5" y="4.6" width="9.2" height="6.4" rx="0.8" fill="#f6f6f6" stroke="#9a9a9a" stroke-width="0.9"/><rect x="3.5" y="4.6" width="9.2" height="1.9" fill="#b4b4b4" stroke="#9a9a9a" stroke-width="0.9"/><rect x="0.5" y="8.8" width="9.4" height="6.6" rx="0.8" fill="#fcfcfc" stroke="#9a9a9a" stroke-width="0.9"/><rect x="0.5" y="8.8" width="9.4" height="1.9" fill="#b4b4b4" stroke="#9a9a9a" stroke-width="0.9"/></svg>
<div class="t" style="left:988.5px;top:81px;letter-spacing:0.29px;">Requester</div>
<svg style="left:1072px;top:79px" width="16" height="16" viewBox="0 0 16 16"><path d="M6.3 1.4 h3.4 v4.9 h4.9 v3.4 h-4.9 v4.9 h-3.4 v-4.9 h-4.9 v-3.4 h4.9z" fill="url(#gGreen)" stroke="#27a027" stroke-width="0.8" stroke-linejoin="round"/><path d="M6.9 2.2 h2.2 v4.7 h4.7 v1 h-11.6 v-1 h4.7z" fill="#7be070" opacity="0.55"/></svg>
<div class="a" style="left:645px;top:104px;width:1271px;height:443px;background:#fff;"></div>
<div class="a" style="left:645px;top:104px;width:118px;height:1px;background:#eaf0f7;"></div>
<div class="a" style="left:763px;top:104px;width:1153px;height:1px;background:#c6c6c6;"></div>
<div class="a" style="left:645px;top:105px;width:1px;height:442px;background:#c9c9c9;"></div>
<div class="a" style="left:645px;top:546px;width:1271px;height:1px;background:#b4b4b4;"></div>
<div class="a" style="left:647px;top:106px;width:1271px;height:440px;background:#fff;border:1px solid #bdbdbd;border-bottom:1px solid #b0b0b0"></div>
<div class="btn" style="left:653px;top:129px;width:30px;height:30px;border-radius:3px"></div>
<div class="t" style="left:663.2px;top:136px;font-size:17px;line-height:18px;">&lt;</div>
<div class="t" style="left:1132.5px;top:125px;font-size:35.7px;line-height:42px;">Automated Scan</div>
<svg style="left:1840px;top:106px" width="76" height="76" viewBox="1840 106 76 76"><circle cx="1881" cy="146" r="30" fill="url(#gZap)"/><path d="M1873.7 112.5 L1848 124.2 L1862.2 134.6 L1858.4 136.4 L1872.4 147.5 L1867.9 150.1 L1903.3 170.4 L1889.9 150.6 L1893.8 148.4 L1884.3 135 L1887.8 133.2 Z" fill="#fff" stroke="#000" stroke-width="2.5" stroke-linejoin="round"/></svg>
<div class="t" style="left:0;top:193px"><span style="position:absolute;left:658.4px;letter-spacing:0.33px">This</span><span style="position:absolute;left:685.5px;letter-spacing:0.33px">screen</span><span style="position:absolute;left:726.8px;letter-spacing:0.44px">allows</span><span style="position:absolute;left:765.2px;letter-spacing:-0.12px">you</span><span style="position:absolute;left:786.9px;letter-spacing:-0.00px">to</span><span style="position:absolute;left:800.6px;letter-spacing:0.27px">launch</span><span style="position:absolute;left:840.8px;letter-spacing:0.33px">an</span><span style="position:absolute;left:857.8px;letter-spacing:0.25px">automated</span><span style="position:absolute;left:919.5px;letter-spacing:0.41px">scan</span><span style="position:absolute;left:949.6px;letter-spacing:0.33px">against</span><span style="position:absolute;left:996.6px;letter-spacing:0.33px">an</span><span style="position:absolute;left:1013.9px;letter-spacing:0.24px">application</span><span style="position:absolute;left:1076.3px;letter-spacing:0.00px">-</span><span style="position:absolute;left:1083.4px;letter-spacing:0.33px">just</span><span style="position:absolute;left:1106.7px;letter-spacing:0.13px">enter</span><span style="position:absolute;left:1138.3px;letter-spacing:0.33px">its</span><span style="position:absolute;left:1153.7px;letter-spacing:0.33px">URL</span><span style="position:absolute;left:1182.0px;letter-spacing:0.33px">below</span><span style="position:absolute;left:1217.8px;letter-spacing:0.33px">and</span><span style="position:absolute;left:1242.2px;letter-spacing:0.53px">press</span><span style="position:absolute;left:1276.7px;letter-spacing:-0.14px">'Attack'.</span></div>
<div class="t" style="left:0;top:219px"><span style="position:absolute;left:658.5px;letter-spacing:0.38px">Please</span><span style="position:absolute;left:700.7px;letter-spacing:0.33px">be</span><span style="position:absolute;left:717.6px;letter-spacing:0.26px">aware</span><span style="position:absolute;left:754.0px;letter-spacing:-0.00px">that</span><span style="position:absolute;left:777.5px;letter-spacing:-0.12px">you</span><span style="position:absolute;left:799.3px;letter-spacing:0.44px">should</span><span style="position:absolute;left:840.4px;letter-spacing:-0.00px">only</span><span style="position:absolute;left:865.6px;letter-spacing:-0.00px">attack</span><span style="position:absolute;left:900.7px;letter-spacing:0.30px">applications</span><span style="position:absolute;left:970.3px;letter-spacing:-0.00px">that</span><span style="position:absolute;left:993.4px;letter-spacing:-0.12px">you</span><span style="position:absolute;left:1016.0px;letter-spacing:-0.01px">have</span><span style="position:absolute;left:1044.8px;letter-spacing:0.33px">been</span><span style="position:absolute;left:1075.6px;letter-spacing:0.17px">specifically</span><span style="position:absolute;left:1138.9px;letter-spacing:0.33px">been</span><span style="position:absolute;left:1169.6px;letter-spacing:0.06px">given</span><span style="position:absolute;left:1201.5px;letter-spacing:0.50px">permission</span><span style="position:absolute;left:1267.3px;letter-spacing:-0.00px">to</span><span style="position:absolute;left:1280.5px;letter-spacing:0.06px">test.</span></div>
<div class="t" style="left:693px;top:286px;">URL to attack:</div>
<div class="a" style="left:818px;top:280px;width:966px;height:24px;border:1px solid #d6e5f4;border-radius:4px"></div>
<div class="a" style="left:819px;top:281px;width:964px;height:22px;background:#fff;border:1px solid #82acd8;border-radius:3px"></div>
<div class="a" style="left:1763px;top:282px;width:1px;height:20px;background:#c4c4c4;"></div>
<svg style="left:1768px;top:288.5px" width="11" height="8" viewBox="0 0 11 8"><path d="M1 1.5 L5.5 6 L10 1.5" fill="none" stroke="#6e6e6e" stroke-width="1.1"/></svg>
<div class="t" style="left:826px;top:286px;letter-spacing:0.12px;">http://www.google.com</div>
<div class="a" style="left:950px;top:284px;width:1px;height:16px;background:#000;"></div>
<div class="btn" style="left:1785px;top:281px;width:92px;height:22px"></div>
<svg style="left:1799px;top:284px" width="16" height="16" viewBox="0 0 16 16"><circle cx="8" cy="8" r="7" fill="url(#gGlobe)"/><path d="M3.4 3.4 C4.4 2.2 5.6 1.8 6.4 2.2 C6.4 3.4 5.4 4 5.6 5.2 C6.4 5.8 7 6.6 6.4 7.6 C5.6 8 5.4 9 5 10 C4.6 11 4.4 12 3.6 12.6 C1.4 10.4 1 6.2 3.4 3.4Z" fill="#48c040"/><path d="M9.6 1.8 C11.2 2 12.8 3 13.8 4.6 C14.6 6 14.8 7.6 14.4 9 C13.6 9.4 12.8 8.8 12 8 C11 7.6 10.4 6.8 10.8 5.8 C10.2 5 9.2 4.4 9.4 3.2Z" fill="#48c040"/><path d="M7.4 8.6 C8.2 8.2 8.8 8.8 8.6 9.6 C8.2 10 7.6 9.6 7.4 8.6Z" fill="#48c040"/><path d="M3.4 3.4 C4.4 2.2 5.6 1.8 6.4 2.2 C6 3 5 3.4 4.6 4.4 C4 5.4 3 6.2 2 6.4 C2.2 5.2 2.6 4.2 3.4 3.4Z" fill="#7ee070" opacity="0.7"/><circle cx="8" cy="8" r="6.8" fill="none" stroke="#27357a" stroke-width="0.6" opacity="0.55"/></svg>
<div class="t" style="left:1819px;top:286px;letter-spacing:-0.04px;">Select...</div>
<div class="t" style="left:693px;top:313px;letter-spacing:0.21px;">Use traditional spider:</div>
<div class="a" style="left:827px;top:312px;width:14px;height:14px;background:#fff;border:1px solid #74a8de;border-radius:2.5px"></div>
<svg style="left:827px;top:312px" width="14" height="14" viewBox="0 0 14 14"><path d="M3 7 L5.8 10.2 L11 3.4" fill="none" stroke="#4a8fd8" stroke-width="1.8"/></svg>
<div class="t" style="left:693px;top:344px;letter-spacing:0.19px;">Use ajax spider:</div>
<div class="a" style="left:827px;top:343px;width:14px;height:14px;background:#fff;border:1px solid #74a8de;border-radius:2.5px"></div>
<svg style="left:827px;top:343px" width="14" height="14" viewBox="0 0 14 14"><path d="M3 7 L5.8 10.2 L11 3.4" fill="none" stroke="#4a8fd8" stroke-width="1.8"/></svg>
<div class="t" style="left:853px;top:344px;letter-spacing:0.17px;">with</div>
<div class="btn" style="left:885px;top:339px;width:136px;height:22px"></div>
<div class="t" style="left:892px;top:344px;letter-spacing:-0.10px;">Firefox</div>
<svg style="left:1005px;top:346px" width="11" height="8" viewBox="0 0 11 8"><path d="M1 1.5 L5.5 6 L10 1.5" fill="none" stroke="#6e6e6e" stroke-width="1.1"/></svg>
<div class="btn" style="left:819px;top:366px;width:82px;height:22px"></div>
<svg style="left:834px;top:369px" width="16" height="16" viewBox="0 0 16 16"><path d="M5.6 0.5 L14.8 0.5 L10.8 4.8 L14.8 5.1 L3.3 15.8 L6.1 9.9 L1.2 9.1 Z" fill="url(#gBolt)" stroke="#c09a10" stroke-width="0.7" stroke-linejoin="round"/></svg>
<div class="t" style="left:854px;top:371px;letter-spacing:-0.06px;">Attack</div>
<div class="btn" style="left:901px;top:366px;width:75px;height:22px;background:#f2f2f2;border-color:#cfcfcf"></div>
<div class="a" style="left:918px;top:371px;width:12px;height:12px;background:#d2d2d2;border:1px solid #c2c2c2"></div>
<div class="t" style="left:936.5px;top:371px;color:#8c8c8c;letter-spacing:0.08px;">Stop</div>
<div class="t" style="left:693px;top:395px;letter-spacing:0.29px;">Progress:</div>
<div class="t" style="left:819px;top:395px;letter-spacing:0.12px;">Not started</div>
<div class="a" style="left:0px;top:582px;width:1916px;height:1px;background:#c4c4c4;"></div>
<div class="a" style="left:0px;top:580px;width:82px;height:3px;background:#85abd5;"></div>
<svg style="left:12px;top:558px" width="16" height="16" viewBox="0 0 16 16"><rect x="1.4" y="2.9" width="13.2" height="12.4" rx="0.8" fill="#fdfdfd" stroke="#d8503c" stroke-width="0.9"/><path d="M1 3.6 q0-0.9 0.9-0.9 h12.2 q0.9 0 0.9 0.9 v3 h-14z" fill="#e6452e"/><path d="M1.4 3.4 h13.2 v1.2 h-13.2z" fill="#f4735c" opacity="0.7"/><rect x="4" y="0.7" width="1.7" height="3" rx="0.85" fill="#f6f6f6" stroke="#c8402c" stroke-width="0.6"/><rect x="10.3" y="0.7" width="1.7" height="3" rx="0.85" fill="#f6f6f6" stroke="#c8402c" stroke-width="0.6"/><rect x="3" y="7.7" width="10" height="1.8" fill="#6cbf6c"/><rect x="3" y="9.5" width="10" height="4.4" fill="#dfeaf8"/><path d="M3.6 10.6 h2.2 M6.9 10.6 h2.2 M10.2 10.6 h2.2 M3.6 12.7 h2.2 M6.9 12.7 h2.2 M10.2 12.7 h2.2" stroke="#fff" stroke-width="1.1"/><rect x="3" y="7.7" width="10" height="6.2" fill="none" stroke="#9db9de" stroke-width="0.6"/></svg>
<div class="t" style="left:32px;top:560px;letter-spacing:0.09px;">History</div>
<svg style="left:94px;top:558px" width="16" height="16" viewBox="0 0 16 16"><path d="M8.2 7.8 L13.8 13.8" stroke="#3f7cc8" stroke-width="3.4" stroke-linecap="round"/><path d="M8.6 8.2 L13.6 13.6" stroke="#7db4f0" stroke-width="1.6" stroke-linecap="round"/><path d="M7.6 7.2 L9.4 9" stroke="#9a9a9a" stroke-width="2.2"/><circle cx="5" cy="4.6" r="4" fill="#d6e6fb" stroke="#a4b0c0" stroke-width="1.1"/><path d="M2.6 4 a2.6 2.4 0 0 1 4.8 0 a3 1.4 0 0 1 -4.8 0z" fill="#6fa4ec"/></svg>
<div class="t" style="left:114px;top:560px;letter-spacing:0.16px;">Search</div>
<svg style="left:177px;top:558px" width="16" height="16" viewBox="0 0 16 16"><path d="M8.2 2.8 C10 3.8 12.6 3.2 14.8 2 L14.8 10 C12.6 11.2 10 11.8 8.2 10.8Z" fill="#f2522e" stroke="#d63c1c" stroke-width="0.5"/><path d="M8.2 2.8 C9 3.2 9.6 3.4 10.2 3.4 L10.2 11.4 C9.6 11.4 9 11.2 8.2 10.8Z" fill="#d63c1c" opacity="0.55"/><path d="M2.6 1.4 C4.4 0 6.6 0.2 8.6 1.4 L8.6 10.4 C6.6 9.2 4.4 9.2 2.6 10.6Z" fill="#f2522e" stroke="#d63c1c" stroke-width="0.5"/><path d="M3 1.8 C4.6 0.8 6.4 1 8.2 2 L8.2 5 C6.4 4 4.6 3.8 3 4.8Z" fill="#fb9a78" opacity="0.75"/><rect x="1.3" y="0.9" width="1.5" height="14.7" rx="0.6" fill="#fde9c9" stroke="#e09a44" stroke-width="0.6"/></svg>
<div class="t" style="left:197.5px;top:560px;letter-spacing:-0.23px;">Alerts</div>
<svg style="left:252px;top:558px" width="16" height="16" viewBox="0 0 16 16"><path d="M2.5 0.5 h7.5 l3.5 3.5 v11.5 h-11z" fill="#fbfbfb" stroke="#ababab" stroke-width="1"/><path d="M10 0.5 v3.5 h3.5" fill="#eee" stroke="#ababab" stroke-width="1"/><path d="M4.6 5.6 h6.8 M4.6 7.4 h6.8 M4.6 9.2 h6.8 M4.6 11 h6.8 M4.6 12.8 h6.8" stroke="#b4b4b4" stroke-width="0.9"/></svg>
<div class="t" style="left:272px;top:560px;">Output</div>
<svg style="left:334px;top:558px" width="16" height="16" viewBox="0 0 16 16"><path d="M6.3 1.4 h3.4 v4.9 h4.9 v3.4 h-4.9 v4.9 h-3.4 v-4.9 h-4.9 v-3.4 h4.9z" fill="url(#gGreen)" stroke="#27a027" stroke-width="0.8" stroke-linejoin="round"/><path d="M6.9 2.2 h2.2 v4.7 h4.7 v1 h-11.6 v-1 h4.7z" fill="#7be070" opacity="0.55"/></svg>
<svg style="left:9px;top:592px" width="16" height="16" viewBox="0 0 16 16"><circle cx="8" cy="8" r="6.5" fill="#dcdcdc" stroke="#6c6c6c" stroke-width="1.5"/><circle cx="8" cy="8" r="3.5" fill="#e6e6e6" stroke="#8a8a8a" stroke-width="1.1"/><circle cx="8" cy="8" r="1.1" fill="#707070"/></svg>
<svg style="left:35px;top:592px" width="16" height="16" viewBox="0 0 16 16"><circle cx="8" cy="8" r="7" fill="#6a6a6a"/><path d="M3.4 3.4 C4.4 2.2 5.6 1.8 6.4 2.2 C6.4 3.4 5.4 4 5.6 5.2 C6.4 5.8 7 6.6 6.4 7.6 C5.6 8 5.4 9 5 10 C4.6 11 4.4 12 3.6 12.6 C1.4 10.4 1 6.2 3.4 3.4Z" fill="#a4a4a4"/><path d="M9.6 1.8 C11.2 2 12.8 3 13.8 4.6 C14.6 6 14.8 7.6 14.4 9 C13.6 9.4 12.8 8.8 12 8 C11 7.6 10.4 6.8 10.8 5.8 C10.2 5 9.2 4.4 9.4 3.2Z" fill="#a4a4a4"/><circle cx="6.6" cy="5" r="3" fill="#bdbdbd" opacity="0.35"/><circle cx="8" cy="8" r="6.7" fill="none" stroke="#555" stroke-width="0.7"/></svg>
<svg style="left:61px;top:592px" width="16" height="16" viewBox="0 0 16 16"><path d="M1.6 2.6 L6.6 9 V15.2 L9.4 13.8 V9 L14.4 2.6Z" fill="url(#gGrey)" stroke="#8e8e8e" stroke-width="0.8" stroke-linejoin="round"/><ellipse cx="8" cy="2.6" rx="6.5" ry="1.8" fill="#ececec" stroke="#8e8e8e" stroke-width="0.9"/><ellipse cx="8" cy="2.8" rx="4.4" ry="0.8" fill="#9a9a9a"/><path d="M7.4 9 V14.2" stroke="#f0f0f0" stroke-width="0.9"/></svg>
<div class="t" style="left:82px;top:594px;letter-spacing:-0.12px;">Filter: OFF</div>
<svg style="left:144px;top:592px" width="16" height="16" viewBox="0 0 16 16"><path d="M5.6 14.8 C2.4 11.6 2.6 7.4 6.6 5.2 L5.4 2.6 L12.4 1 L11.6 8.2 L9 6.8 C6.4 8.4 6 10.8 7.8 13.8Z" fill="url(#gGreenL)" stroke="#239a23" stroke-width="0.8" stroke-linejoin="round"/></svg>
<div class="t" style="left:163.5px;top:594px;letter-spacing:-0.11px;">Export</div>
<div class="a" style="left:0px;top:617px;width:1916px;height:403px;background:#fff;"></div>
<div class="a" style="left:0px;top:617px;width:1916px;height:1px;background:#c4c4c4;"></div>
<div class="a" style="left:0px;top:617px;width:1px;height:403px;background:#c4c4c4;"></div>
<div class="a" style="left:1px;top:642px;width:1908px;height:1px;background:#e4e4e4;"></div>
<div class="t" style="left:1px;width:118px;top:624px;text-align:center;letter-spacing:-0.00px">Id</div>
<div class="a" style="left:118px;top:618px;width:1px;height:25px;background:#e4e4e4;"></div>
<div class="t" style="left:119px;width:127px;top:624px;text-align:center;letter-spacing:0.16px">Source</div>
<div class="a" style="left:245px;top:618px;width:1px;height:25px;background:#e4e4e4;"></div>
<div class="t" style="left:246px;width:209px;top:624px;text-align:center;letter-spacing:0.28px">Req. Timestamp</div>
<div class="a" style="left:454px;top:618px;width:1px;height:25px;background:#e4e4e4;"></div>
<div class="t" style="left:455px;width:127px;top:624px;text-align:center;letter-spacing:0.16px">Method</div>
<div class="a" style="left:581px;top:618px;width:1px;height:25px;background:#e4e4e4;"></div>
<div class="t" style="left:582px;width:330px;top:624px;text-align:center;letter-spacing:0.33px">URL</div>
<div class="a" style="left:911px;top:618px;width:1px;height:25px;background:#e4e4e4;"></div>
<div class="t" style="left:912px;width:117px;top:624px;text-align:center;letter-spacing:0.33px">Code</div>
<div class="a" style="left:1028px;top:618px;width:1px;height:25px;background:#e4e4e4;"></div>
<div class="t" style="left:1029px;width:144px;top:624px;text-align:center;letter-spacing:0.44px">Reason</div>
<div class="a" style="left:1172px;top:618px;width:1px;height:25px;background:#e4e4e4;"></div>
<div class="t" style="left:1173px;width:109px;top:624px;text-align:center;letter-spacing:-0.11px">RTT</div>
<div class="a" style="left:1281px;top:618px;width:1px;height:25px;background:#e4e4e4;"></div>
<div class="t" style="left:1282px;width:175px;top:624px;text-align:center;letter-spacing:0.09px">Size Resp. Body</div>
<div class="a" style="left:1456px;top:618px;width:1px;height:25px;background:#e4e4e4;"></div>
<div class="t" style="left:1457px;width:156px;top:624px;text-align:center;letter-spacing:0.18px">Highest Alert</div>
<div class="a" style="left:1612px;top:618px;width:1px;height:25px;background:#e4e4e4;"></div>
<div class="t" style="left:1613px;width:114px;top:624px;text-align:center;letter-spacing:0.16px">Note</div>
<div class="a" style="left:1726px;top:618px;width:1px;height:25px;background:#e4e4e4;"></div>
<div class="t" style="left:1727px;width:182px;top:624px;text-align:center;letter-spacing:0.33px">Tags</div>
<div class="a" style="left:1908px;top:618px;width:1px;height:25px;background:#e4e4e4;"></div>
<div class="a" style="left:1910px;top:643px;width:6px;height:377px;background:#f5f5f5;"></div>
<svg style="left:1909px;top:624px" width="7" height="12" viewBox="0 0 7 12"><path d="M0.5 1.5 h6.5 M0.5 1.5 v7 h3 M0.5 4.5 h6.5 M3.5 1.5 v7 M6.5 1.5 v3" fill="none" stroke="#222" stroke-width="1"/><path d="M3.4 7.6 h3.6 v3.6z" fill="#222"/></svg>
<div class="a" style="left:0px;top:1019px;width:1916px;height:1px;background:#d8d8d8;"></div>
<div class="a" style="left:0px;top:1020px;width:1916px;height:1px;background:#a8a8a8;"></div>
<div class="a" style="left:0px;top:1021px;width:1916px;height:1px;background:#fff;"></div>
<div class="a" style="left:1px;top:1021px;width:1px;height:17px;background:#fff;"></div>
<div class="a" style="left:0px;top:1021px;width:1px;height:18px;background:#bdbdbd;"></div>
<div class="a" style="left:1px;top:1037px;width:1915px;height:1px;background:#fbfbfb;"></div>
<div class="a" style="left:0px;top:1038px;width:1916px;height:1px;background:#b4b4b4;"></div>
<div class="a" style="left:0px;top:1039px;width:1916px;height:1px;background:#e8e8e8;"></div>
<div class="t" style="left:10.0px;top:1024px;letter-spacing:-0.09px;">Alerts</div>
<svg style="left:48.6px;top:1024.6px" width="11" height="11" viewBox="0 0 16 16"><path d="M8.2 2.8 C10 3.8 12.6 3.2 14.8 2 L14.8 10 C12.6 11.2 10 11.8 8.2 10.8Z" fill="#f2603c" stroke="#d8431f" stroke-width="0.5"/><path d="M8.2 2.8 C9 3.2 9.6 3.4 10.2 3.4 L10.2 11.4 C9.6 11.4 9 11.2 8.2 10.8Z" fill="#d8431f" opacity="0.55"/><path d="M2.6 1.4 C4.4 0 6.6 0.2 8.6 1.4 L8.6 10.4 C6.6 9.2 4.4 9.2 2.6 10.6Z" fill="#f2603c" stroke="#d8431f" stroke-width="0.5"/><path d="M3 1.8 C4.6 0.8 6.4 1 8.2 2 L8.2 5 C6.4 4 4.6 3.8 3 4.8Z" fill="#fba488" opacity="0.75"/><rect x="1.3" y="0.9" width="1.5" height="14.7" rx="0.6" fill="#fde9c9" stroke="#e09a44" stroke-width="0.6"/></svg>
<div class="t" style="left:64px;top:1024px;">0</div>
<svg style="left:79.6px;top:1024.6px" width="11" height="11" viewBox="0 0 16 16"><path d="M8.2 2.8 C10 3.8 12.6 3.2 14.8 2 L14.8 10 C12.6 11.2 10 11.8 8.2 10.8Z" fill="#f7a02c" stroke="#dc8410" stroke-width="0.5"/><path d="M8.2 2.8 C9 3.2 9.6 3.4 10.2 3.4 L10.2 11.4 C9.6 11.4 9 11.2 8.2 10.8Z" fill="#dc8410" opacity="0.55"/><path d="M2.6 1.4 C4.4 0 6.6 0.2 8.6 1.4 L8.6 10.4 C6.6 9.2 4.4 9.2 2.6 10.6Z" fill="#f7a02c" stroke="#dc8410" stroke-width="0.5"/><path d="M3 1.8 C4.6 0.8 6.4 1 8.2 2 L8.2 5 C6.4 4 4.6 3.8 3 4.8Z" fill="#fcc878" opacity="0.75"/><rect x="1.3" y="0.9" width="1.5" height="14.7" rx="0.6" fill="#fde9c9" stroke="#e09a44" stroke-width="0.6"/></svg>
<div class="t" style="left:94.5px;top:1024px;">0</div>
<svg style="left:110.6px;top:1024.6px" width="11" height="11" viewBox="0 0 16 16"><path d="M8.2 2.8 C10 3.8 12.6 3.2 14.8 2 L14.8 10 C12.6 11.2 10 11.8 8.2 10.8Z" fill="#f5dc4c" stroke="#d0b020" stroke-width="0.5"/><path d="M8.2 2.8 C9 3.2 9.6 3.4 10.2 3.4 L10.2 11.4 C9.6 11.4 9 11.2 8.2 10.8Z" fill="#d0b020" opacity="0.55"/><path d="M2.6 1.4 C4.4 0 6.6 0.2 8.6 1.4 L8.6 10.4 C6.6 9.2 4.4 9.2 2.6 10.6Z" fill="#f5dc4c" stroke="#d0b020" stroke-width="0.5"/><path d="M3 1.8 C4.6 0.8 6.4 1 8.2 2 L8.2 5 C6.4 4 4.6 3.8 3 4.8Z" fill="#fbf0a0" opacity="0.75"/><rect x="1.3" y="0.9" width="1.5" height="14.7" rx="0.6" fill="#fde9c9" stroke="#e09a44" stroke-width="0.6"/></svg>
<div class="t" style="left:125.5px;top:1024px;">0</div>
<svg style="left:141.2px;top:1024.6px" width="11" height="11" viewBox="0 0 16 16"><path d="M8.2 2.8 C10 3.8 12.6 3.2 14.8 2 L14.8 10 C12.6 11.2 10 11.8 8.2 10.8Z" fill="#6aa8ea" stroke="#4684cc" stroke-width="0.5"/><path d="M8.2 2.8 C9 3.2 9.6 3.4 10.2 3.4 L10.2 11.4 C9.6 11.4 9 11.2 8.2 10.8Z" fill="#4684cc" opacity="0.55"/><path d="M2.6 1.4 C4.4 0 6.6 0.2 8.6 1.4 L8.6 10.4 C6.6 9.2 4.4 9.2 2.6 10.6Z" fill="#6aa8ea" stroke="#4684cc" stroke-width="0.5"/><path d="M3 1.8 C4.6 0.8 6.4 1 8.2 2 L8.2 5 C6.4 4 4.6 3.8 3 4.8Z" fill="#b4d4f8" opacity="0.75"/><rect x="1.3" y="0.9" width="1.5" height="14.7" rx="0.6" fill="#fde9c9" stroke="#e09a44" stroke-width="0.6"/></svg>
<div class="t" style="left:156.5px;top:1024px;">0</div>
<div class="a" style="left:171px;top:1024px;width:1px;height:12px;background:#cdcdcd;"></div>
<div class="t" style="left:175.5px;top:1024px;letter-spacing:0.00px;">Main Proxy: localhost:8080</div>
<div class="t" style="left:1543px;top:1024px;letter-spacing:0.18px;">Current Scans</div>
<svg style="left:1627px;top:1022px" width="16" height="16" viewBox="0 0 16 16"><path d="M15.30 8.20 L14.04 9.58 L14.58 11.37 L12.85 12.07 L12.55 13.91 L10.69 13.79 L9.62 15.32 L8.00 14.40 L6.38 15.32 L5.31 13.79 L3.45 13.91 L3.15 12.07 L1.42 11.37 L1.96 9.58 L0.70 8.20 L1.96 6.82 L1.42 5.03 L3.15 4.33 L3.45 2.49 L5.31 2.61 L6.38 1.08 L8.00 2.00 L9.62 1.08 L10.69 2.61 L12.55 2.49 L12.85 4.33 L14.58 5.03 L14.04 6.82 Z" fill="#f25c3e" stroke="#ea4a2c" stroke-width="0.5"/><circle cx="7.2" cy="6.8" r="4.2" fill="#f98a6c" opacity="0.55"/></svg>
<div class="t" style="left:1647.3px;top:1024px;">0</div>
<svg style="left:1664px;top:1022px" width="16" height="16" viewBox="0 0 16 16"><path d="M3.8 1.2 h8.6 v6 h3.2 L8 15.2 L0.4 7.2 h3.4z" fill="#2f74cc" stroke="#1c4788" stroke-width="0.9" stroke-linejoin="round"/><path d="M4.3 1.7 h7.6 v5.4 h-7.6z" fill="#9a846c"/><rect x="5" y="2.2" width="2.8" height="2.8" fill="#e8582c"/><rect x="8.2" y="2.2" width="2.8" height="2.8" fill="#6cc43c"/><rect x="5" y="5.4" width="2.8" height="3" fill="#48a0ec"/><rect x="8.2" y="5.4" width="2.8" height="3" fill="#f4d43c"/><path d="M4 9 L8 13 L12 9" fill="none" stroke="#6cb0f4" stroke-width="1" opacity="0.8"/></svg>
<div class="t" style="left:1684.3px;top:1024px;">0</div>
<svg style="left:1701px;top:1022px" width="16" height="16" viewBox="0 0 16 16"><path d="M0.7 8 C3.6 3.4 12.4 3.4 15.3 8 C12.4 12.4 3.6 12.4 0.7 8Z" fill="#f4f4f4" stroke="#4e4e4e" stroke-width="1.3"/><circle cx="8" cy="7.8" r="3.2" fill="#767676" stroke="#484848" stroke-width="0.6"/><circle cx="8" cy="7.8" r="1.6" fill="#222"/><circle cx="6.9" cy="6.7" r="0.8" fill="#d8d8d8"/></svg>
<div class="t" style="left:1721.3px;top:1024px;">0</div>
<svg style="left:1738px;top:1022px" width="16" height="16" viewBox="0 0 16 16"><path d="M4.4 1 C8.6 1.6 13 5.2 13 9.6 C13 13 10.8 15.4 8 15.4 C5 15.4 2.8 13.2 2.8 10.4 C2.8 7.6 5.4 6.6 6 4.4 C6.2 3.2 5.6 2 4.4 1Z" fill="#f27f1e"/><path d="M8.2 6.2 C10 8 11.2 9.8 10.8 11.8 C10.4 13.6 9.2 14.6 7.8 14.6 C6 14.6 5 13.2 5.2 11.6 C5.4 9.8 7.6 8.8 8.2 6.2Z" fill="#fbd548"/><path d="M8 10.4 C9 11.4 9.4 12.4 9 13.2 C8.6 14 7.6 14.2 7 13.6 C6.4 13 6.8 11.6 8 10.4Z" fill="#fff6c8"/></svg>
<div class="t" style="left:1758.3px;top:1024px;">0</div>
<svg style="left:1775px;top:1022px" width="16" height="16" viewBox="0 0 16 16"><circle cx="8" cy="8" r="7" fill="#ea5a68"/><circle cx="8" cy="8" r="5.3" fill="#fbd4d8"/><circle cx="8" cy="8" r="3.8" fill="#ee6874"/><circle cx="8" cy="8" r="2.2" fill="#fbd4d8"/><circle cx="8" cy="8" r="1" fill="#e84a5a"/></svg>
<div class="t" style="left:1795.3px;top:1024px;">0</div>
<svg style="left:1812px;top:1022px" width="16" height="16" viewBox="0 0 16 16"><path d="M1.6 14.6 L9.4 6.2" stroke="#1e1e1e" stroke-width="2.9" stroke-linecap="round"/><path d="M2.2 13.4 L9 6" stroke="#6a6a6a" stroke-width="0.8" stroke-linecap="round"/><path d="M6.2 2.4 C8.8 0 13 0.6 15.6 5.2 C15.8 6 15 6.4 14.4 5.8 C13.2 4.6 12.2 4.4 11.4 5 L12.6 6.4 L10.6 8.4 L6.4 4.2 C5.8 3.6 5.6 3 6.2 2.4Z" fill="#d8d8d8" stroke="#8a8a8a" stroke-width="0.7" stroke-linejoin="round"/></svg>
<div class="t" style="left:1832.3px;top:1024px;">0</div>
<svg style="left:1849.5px;top:1022.4px" width="16" height="16" viewBox="0 0 16 16"><path d="M7 6.4 Q4 5.6 3.6 3.4 Q3.4 2 3.4 0.8 M6.4 7.8 Q3.4 7.6 2 6.4 Q1 5.4 1 3.8 M6.4 9.2 Q3.6 9.4 2.2 10.6 Q1.2 11.6 1.2 12.8 M7 10.6 Q4.4 11.6 3.6 13 Q3.4 14.4 4.6 15.6 M9 6.4 Q12 5.6 12.4 3.4 Q12.6 2 12.6 0.8 M9.6 7.8 Q12.6 7.6 14 6.4 Q15 5.4 15 3.8 M9.6 9.2 Q12.4 9.4 13.8 10.6 Q14.8 11.6 14.8 12.8 M9 10.6 Q11.6 11.6 12.4 13 Q12.6 14.4 11.4 15.6" stroke="#c01c14" stroke-width="0.95" fill="none" stroke-linecap="round"/><path d="M8 6 C9.8 6 10.4 7.8 10 9.4 C9.6 11 8.8 12 8 12.2 C7.2 12 6.4 11 6 9.4 C5.6 7.8 6.2 6 8 6Z" fill="#e8483c" stroke="#c01c14" stroke-width="0.9"/><path d="M8 2 C8.8 2 9.2 3 9 4 L8.7 5.8 H7.3 L7 4 C6.8 3 7.2 2 8 2Z" fill="#e8483c" stroke="#c01c14" stroke-width="0.8"/></svg>
<div class="t" style="left:1869.3px;top:1024px;">0</div>
<svg style="left:1886.5px;top:1022.4px" width="16" height="16" viewBox="0 0 16 16"><path d="M7 6.4 Q4 5.6 3.6 3.4 Q3.4 2 3.4 0.8 M6.4 7.8 Q3.4 7.6 2 6.4 Q1 5.4 1 3.8 M6.4 9.2 Q3.6 9.4 2.2 10.6 Q1.2 11.6 1.2 12.8 M7 10.6 Q4.4 11.6 3.6 13 Q3.4 14.4 4.6 15.6 M9 6.4 Q12 5.6 12.4 3.4 Q12.6 2 12.6 0.8 M9.6 7.8 Q12.6 7.6 14 6.4 Q15 5.4 15 3.8 M9.6 9.2 Q12.4 9.4 13.8 10.6 Q14.8 11.6 14.8 12.8 M9 10.6 Q11.6 11.6 12.4 13 Q12.6 14.4 11.4 15.6" stroke="#333" stroke-width="0.95" fill="none" stroke-linecap="round"/><path d="M8 6 C9.8 6 10.4 7.8 10 9.4 C9.6 11 8.8 12 8 12.2 C7.2 12 6.4 11 6 9.4 C5.6 7.8 6.2 6 8 6Z" fill="#8a8a8a" stroke="#333" stroke-width="0.9"/><path d="M8 2 C8.8 2 9.2 3 9 4 L8.7 5.8 H7.3 L7 4 C6.8 3 7.2 2 8 2Z" fill="#8a8a8a" stroke="#333" stroke-width="0.8"/></svg>
<div class="t" style="left:1906.3px;top:1024px;">0</div>
<div class="a" style="left:0px;top:1040px;width:1916px;height:1px;background:#16202c;"></div>
<div class="a" style="left:48px;top:1040px;width:287px;height:1px;background:#d8d8d8;"></div>
<div class="a" style="left:1269px;top:1040px;width:48px;height:1px;background:#d8d8d8;"></div>
</body></html>
